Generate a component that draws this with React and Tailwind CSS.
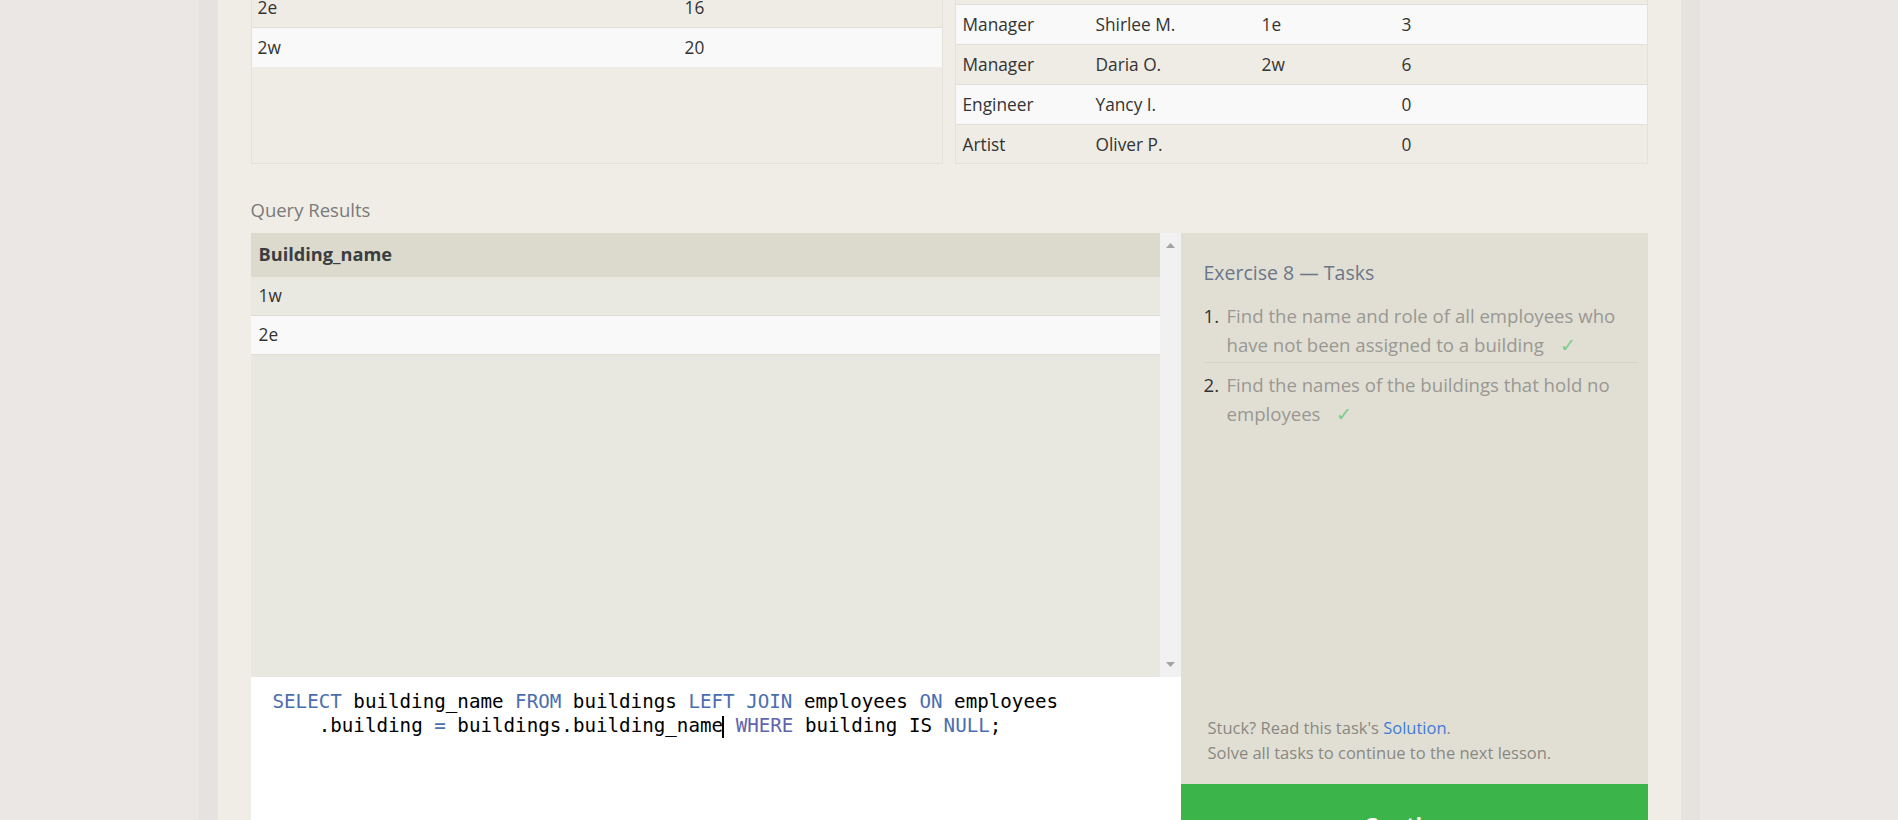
import React from "react";

const buildings = [
  { name: "1e", capacity: 24 },
  { name: "1w", capacity: 32 },
  { name: "2e", capacity: 16 },
  { name: "2w", capacity: 20 },
];

const employees = [
  ["Engineer", "Becky A.", "1e", 4],
  ["Engineer", "Dan B.", "1e", 2],
  ["Engineer", "Sharon F.", "1e", 6],
  ["Engineer", "Dan M.", "1e", 4],
  ["Engineer", "Malcom S.", "1e", 1],
  ["Artist", "Tylar S.", "2w", 2],
  ["Artist", "Sherman D.", "2w", 8],
  ["Artist", "Jakob J.", "2w", 6],
  ["Artist", "Lillia A.", "2w", 7],
  ["Artist", "Brandon J.", "2w", 7],
  ["Manager", "Scott K.", "1e", 9],
  ["Manager", "Shirlee M.", "1e", 3],
  ["Manager", "Daria O.", "2w", 6],
  ["Engineer", "Yancy I.", "", 0],
  ["Artist", "Oliver P.", "", 0],
];

const results = ["1w", "2e"];

const kw = "text-[#4b6eaf]";

function Arrow({ up }) {
  return (
    <svg width="9" height="5" viewBox="0 0 9 5" className="fill-[#a3a3a3]">
      {up ? <path d="M4.5 0 L9 5 L0 5 Z" /> : <path d="M0 0 L9 0 L4.5 5 Z" />}
    </svg>
  );
}

export default function App() {
  return (
    <div
      className="w-full h-[820px] overflow-hidden bg-[#ebe7e4] flex justify-center text-[#333]"
      style={{ fontFamily: '"Open Sans", sans-serif' }}
    >
      <div className="w-[1463px] shrink-0 bg-[#f0ede6] shadow-[0_0_0_19px_#e6e2df] px-[33px]">
        {/* top tables, scrolled partly out of view */}
        <div className="-mt-[138px] grid grid-cols-[692px_693px] gap-3 h-[302px] text-[17.3px]">
          <div className="border border-[#e4e1da] bg-[#efece5] overflow-hidden">
            <div className="flex h-[44px] items-center font-bold bg-[#e5e2d9]">
              <div className="w-[427px] pl-[6px]">Building_name</div>
              <div className="pl-[6px]">Capacity</div>
            </div>
            {buildings.map((b, i) => (
              <div
                key={b.name}
                className={`flex h-[40px] items-center border-t border-[#e2dfd8] ${
                  i % 2 ? "bg-[#f9f9f9]" : "bg-[#efece5]"
                }`}
              >
                <div className="w-[427px] pl-[6px]">{b.name}</div>
                <div className="pl-[6px]">{b.capacity}</div>
              </div>
            ))}
          </div>

          <div className="border border-[#e4e1da] bg-[#efece5] overflow-hidden flex flex-col justify-end">
            <div className="-mb-[2px]">
              {employees.map((e, i) => (
                <div
                  key={e[1]}
                  className={`flex h-[40px] items-center border-b border-[#e2dfd8] ${
                    i % 2 ? "bg-[#f9f9f9]" : "bg-[#efece5]"
                  }`}
                >
                  <div className="w-[133px] pl-[7px]">{e[0]}</div>
                  <div className="w-[166px] pl-[7px]">{e[1]}</div>
                  <div className="w-[140px] pl-[7px]">{e[2]}</div>
                  <div className="pl-[7px]">{e[3]}</div>
                </div>
              ))}
            </div>
          </div>
        </div>

        <div className="pt-[33px] pb-[10px] text-[18.5px] leading-[26px] text-[#7a7a7a]">Query Results</div>

        <div className="grid grid-cols-[930px_467px]">
          {/* left: results + editor */}
          <div className="flex flex-col">
            <div className="flex h-[444px] bg-[#e9e8e0]">
              <div className="flex-1">
                <div className="h-[44px] flex items-center bg-[#dbdacd] pl-[8px] font-bold text-[18.2px] text-[#3a3d42]">
                  Building_name
                </div>
                {results.map((r, i) => (
                  <div
                    key={r}
                    className={`h-[39px] flex items-center pl-[8px] text-[17.3px] border-b border-[#dedcd4] ${
                      i % 2 ? "bg-[#f9f9f9]" : "bg-[#eae9e1]"
                    }`}
                  >
                    {r}
                  </div>
                ))}
              </div>
              <div className="w-[21px] bg-[#f1f1f1] flex flex-col items-center justify-between py-[10px]">
                <Arrow up />
                <Arrow />
              </div>
            </div>
            <div
              className="bg-white h-[200px] pl-[22px] pt-[13px] text-[19.2px] leading-[24px] text-black"
              style={{ fontFamily: '"DejaVu Sans Mono", monospace' }}
            >
              <div className="whitespace-pre">
                <span className={kw}>SELECT</span> building_name <span className={kw}>FROM</span> buildings{" "}
                <span className={kw}>LEFT JOIN</span> employees <span className={kw}>ON</span> employees
              </div>
              <div className="whitespace-pre">
                {"    "}.building <span className={kw}>=</span> buildings.building_name
                <span className="inline-block w-[2px] h-[22px] bg-black align-middle -ml-[1px]" />{" "}
                <span className="text-[#5f64ad]">WHERE</span> building IS <span className={kw}>NULL</span>;
              </div>
            </div>
          </div>

          {/* right: tasks */}
          <div className="flex flex-col">
            <div className="h-[551px] bg-[#e1dfd4] flex flex-col justify-between pl-[23px] pr-[10px] pt-[26px] pb-[19px]">
              <div>
                <div className="text-[19.5px] leading-[28px] text-[#6b7689]">Exercise 8 — Tasks</div>
                <ol className="mt-[14px] text-[18.6px] leading-[29px] text-[#999893]">
                  <li className="flex pb-[3px] border-b border-[#d5d3c8]">
                    <span className="w-[23px] shrink-0 text-[#333]">1.</span>
                    <span>
                      Find the name and role of all employees who have not been assigned to a building
                      <span className="ml-[16px] text-[#7ccb8a]">✓</span>
                    </span>
                  </li>
                  <li className="flex pt-[7px]">
                    <span className="w-[23px] shrink-0 text-[#333]">2.</span>
                    <span>
                      Find the names of the buildings that hold no employees
                      <span className="ml-[16px] text-[#7ccb8a]">✓</span>
                    </span>
                  </li>
                </ol>
              </div>
              <div className="pl-[4px] text-[16.5px] leading-[25px] text-[#8a8882]">
                <div>
                  Stuck? Read this task's <span className="text-[#3f7bd6]">Solution</span>.
                </div>
                <div>Solve all tasks to continue to the next lesson.</div>
              </div>
            </div>
            <button className="h-[80px] bg-[#3bb54a] text-white text-[22px] font-bold">Continue</button>
          </div>
        </div>
      </div>
    </div>
  );
}
